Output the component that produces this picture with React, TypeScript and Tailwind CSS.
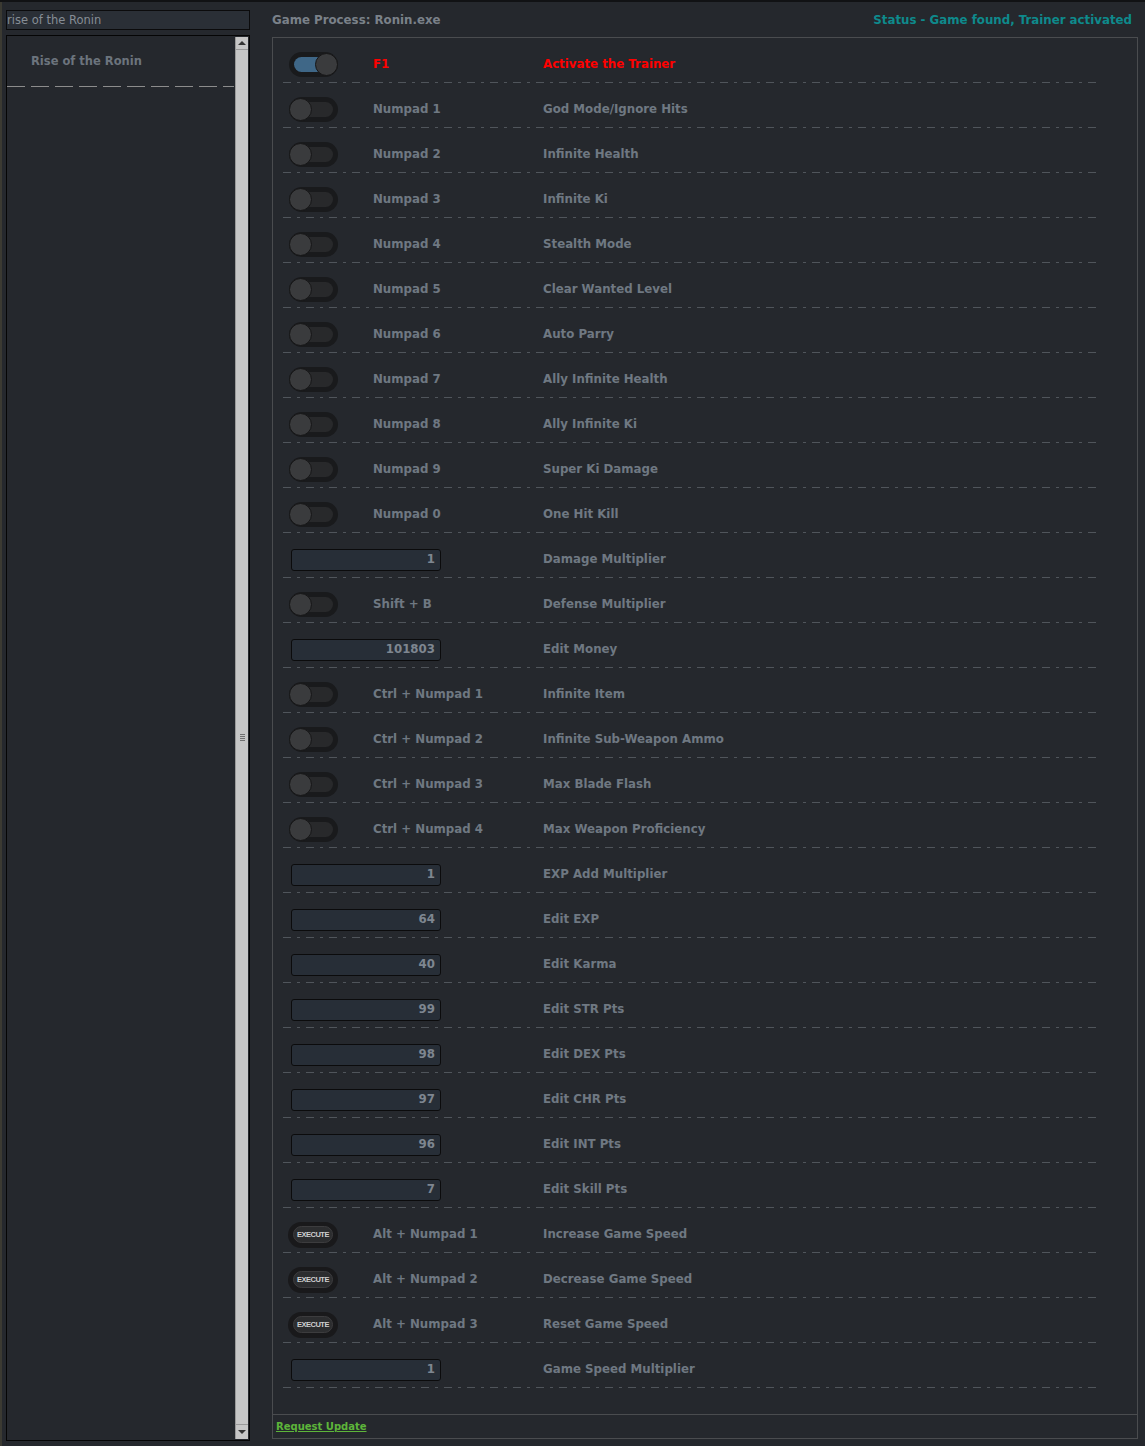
import React from "react";

type Row =
  | { kind: "toggle"; on?: boolean; key: string; label: string; red?: boolean }
  | { kind: "input"; value: string; label: string }
  | { kind: "exec"; key: string; label: string };

const rows: Row[] = [
  { kind: "toggle", on: true, key: "F1", label: "Activate the Trainer", red: true },
  { kind: "toggle", key: "Numpad 1", label: "God Mode/Ignore Hits" },
  { kind: "toggle", key: "Numpad 2", label: "Infinite Health" },
  { kind: "toggle", key: "Numpad 3", label: "Infinite Ki" },
  { kind: "toggle", key: "Numpad 4", label: "Stealth Mode" },
  { kind: "toggle", key: "Numpad 5", label: "Clear Wanted Level" },
  { kind: "toggle", key: "Numpad 6", label: "Auto Parry" },
  { kind: "toggle", key: "Numpad 7", label: "Ally Infinite Health" },
  { kind: "toggle", key: "Numpad 8", label: "Ally Infinite Ki" },
  { kind: "toggle", key: "Numpad 9", label: "Super Ki Damage" },
  { kind: "toggle", key: "Numpad 0", label: "One Hit Kill" },
  { kind: "input", value: "1", label: "Damage Multiplier" },
  { kind: "toggle", key: "Shift + B", label: "Defense Multiplier" },
  { kind: "input", value: "101803", label: "Edit Money" },
  { kind: "toggle", key: "Ctrl + Numpad 1", label: "Infinite Item" },
  { kind: "toggle", key: "Ctrl + Numpad 2", label: "Infinite Sub-Weapon Ammo" },
  { kind: "toggle", key: "Ctrl + Numpad 3", label: "Max Blade Flash" },
  { kind: "toggle", key: "Ctrl + Numpad 4", label: "Max Weapon Proficiency" },
  { kind: "input", value: "1", label: "EXP Add Multiplier" },
  { kind: "input", value: "64", label: "Edit EXP" },
  { kind: "input", value: "40", label: "Edit Karma" },
  { kind: "input", value: "99", label: "Edit STR Pts" },
  { kind: "input", value: "98", label: "Edit DEX Pts" },
  { kind: "input", value: "97", label: "Edit CHR Pts" },
  { kind: "input", value: "96", label: "Edit INT Pts" },
  { kind: "input", value: "7", label: "Edit Skill Pts" },
  { kind: "exec", key: "Alt + Numpad 1", label: "Increase Game Speed" },
  { kind: "exec", key: "Alt + Numpad 2", label: "Decrease Game Speed" },
  { kind: "exec", key: "Alt + Numpad 3", label: "Reset Game Speed" },
  { kind: "input", value: "1", label: "Game Speed Multiplier" },
];

function Toggle({ on }: { on?: boolean }) {
  return (
    <div className="relative ml-[6px] h-[25px] w-[49px] rounded-full bg-[#191a1c]">
      <div
        className={
          on
            ? "absolute inset-x-[5px] inset-y-[5px] rounded-full bg-[#3f6787]"
            : "absolute inset-x-[5px] inset-y-[5px] rounded-full bg-[#28292b]"
        }
      />
      <div
        className={
          on
            ? "absolute right-0 top-[1px] h-[23px] w-[23px] rounded-full border border-[#161617] bg-[#3a3b3d]"
            : "absolute left-0 top-[1px] h-[23px] w-[23px] rounded-full border border-[#161617] bg-[#3a3b3d]"
        }
      />
    </div>
  );
}

function Execute() {
  return (
    <div className="ml-[5px] flex h-[26px] w-[50px] items-center justify-center rounded-full bg-[#19191b]">
      <div className="flex h-[17px] w-[40px] items-center justify-center rounded-full border border-[#3c3c3e] bg-[#2c2d2f] font-['Liberation_Sans',sans-serif] text-[7.5px] tracking-[-0.5px] text-[#cfcfcf]">
        EXECUTE
      </div>
    </div>
  );
}

function NumBox({ value }: { value: string }) {
  return (
    <div className="ml-[8px] flex h-[22px] w-[150px] items-center justify-end rounded-[3px] border border-[#0b0b0c] bg-[#272e37] pr-[5px] text-[#7e8690]">
      {value}
    </div>
  );
}

function TrainerRow({ row }: { row: Row }) {
  const red = row.kind === "toggle" && row.red;
  return (
    <div className="flex h-[45px] flex-col">
      <div className="flex flex-1 items-center pt-[9px]">
        <div className="w-[90px] shrink-0">
          {row.kind === "toggle" && <Toggle on={row.on} />}
          {row.kind === "exec" && <Execute />}
          {row.kind === "input" && <NumBox value={row.value} />}
        </div>
        <div className={red ? "w-[170px] text-[#ff0000]" : "w-[170px]"}>
          {row.kind !== "input" ? row.key : ""}
        </div>
        <div className={red ? "text-[#ff0000]" : ""}>{row.label}</div>
      </div>
      <div className="h-px w-full bg-[image:repeating-linear-gradient(to_right,#50555b_0_8px,transparent_8px_14px,#50555b_14px_17px,transparent_17px_23px)]" />
    </div>
  );
}

function Scrollbar() {
  return (
    <div className="flex w-[13px] flex-col border-l border-[#9a9a9a] bg-[#c6c6c6]">
      <div className="flex h-[13px] items-center justify-center border-b border-[#999]">
        <div className="h-0 w-0 border-x-[4px] border-b-[4px] border-x-transparent border-b-[#333]" />
      </div>
      <div className="flex flex-1 flex-col items-center justify-center gap-[1px]">
        <div className="h-px w-[5px] bg-[#707070]" />
        <div className="h-px w-[5px] bg-[#707070]" />
        <div className="h-px w-[5px] bg-[#707070]" />
        <div className="h-px w-[5px] bg-[#707070]" />
      </div>
      <div className="flex h-[15px] items-center justify-center border-t border-[#999]">
        <div className="h-0 w-0 border-x-[4px] border-t-[4px] border-x-transparent border-t-[#333]" />
      </div>
    </div>
  );
}

export default function App() {
  return (
    <div className="flex h-[1446px] w-full border-t-2 border-[#111214] bg-[#25282d] font-['DejaVu_Sans',sans-serif] text-[11.8px] font-bold text-[#6f7882]">
      <div className="w-[2px] shrink-0 bg-[#3b3a32]" />
      {/* left column: search + game list */}
      <div className="ml-[4px] flex w-[244px] shrink-0 flex-col pt-[8px]">
        <div className="flex h-[20px] items-center border border-[#0b0b0c] bg-[#2a2f36] pt-[1px] text-[11.5px] font-normal text-[#868d95]">
          rise of the Ronin
        </div>
        <div className="mt-[5px] flex h-[1406px] border border-[#050505]">
          <div className="flex-1">
            <div className="flex h-[50px] items-center pl-[24px] pt-[2px] text-[11.5px] text-[#6c747d]">
              Rise of the Ronin
            </div>
            <div className="mr-[1px] h-px bg-[image:repeating-linear-gradient(to_right,#8c8c8c_0_18px,transparent_18px_24px)]" />
          </div>
          <div className="py-[1px] pr-[1px]">
            <div className="flex h-full">
              <Scrollbar />
            </div>
          </div>
        </div>
      </div>

      {/* right column */}
      <div className="ml-[22px] mr-[7px] flex flex-1 flex-col">
        <div className="flex h-[35px] items-center justify-between pt-[3px] text-[#7a8189]">
          <span>Game Process: Ronin.exe</span>
          <span className="mr-[6px] text-[#0e8a8c]">Status - Game found, Trainer activated</span>
        </div>
        <div className="flex h-[1402px] flex-col border border-[#4a4c4f]">
          <div className="flex-1 pl-[10px] pr-[36px]">
            {rows.map((r, i) => (
              <TrainerRow key={i} row={r} />
            ))}
          </div>
          <div className="flex h-[24px] items-center border-t border-[#4a4c4f] pl-[3px]">
            <span className="text-[10px] text-[#5db53a] underline">Request Update</span>
          </div>
        </div>
      </div>
    </div>
  );
}
